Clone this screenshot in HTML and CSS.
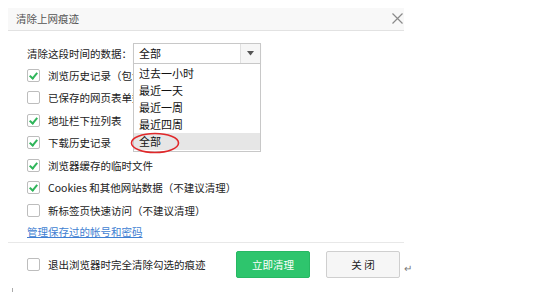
FILE: index.html
```html
<!DOCTYPE html>
<html>
<head>
<meta charset="utf-8">
<link rel="stylesheet" href="styles.css">
</head>
<body>
<div class="dialog">
  <div class="header">
    <span class="title">清除上网痕迹</span>
    <svg class="close-x" width="11" height="11" viewBox="0 0 11 11"><path d="M0.5 0.5 L10.5 10.5 M10.5 0.5 L0.5 10.5" stroke="#8a8a8a" stroke-width="1.2" fill="none"/></svg>
  </div>
  <div class="content">
    <div class="range-row">
      <span class="label">清除这段时间的数据：</span>
      <div class="select">
        <span class="select-value">全部</span>
        <span class="select-arrow"><svg width="7" height="5" viewBox="0 0 7 5"><path d="M0 0 H7 L3.5 4.5 Z" fill="#555"/></svg></span>
        <div class="dropdown">
          <div class="opt">过去一小时</div>
          <div class="opt">最近一天</div>
          <div class="opt">最近一周</div>
          <div class="opt">最近四周</div>
          <div class="opt selected">全部</div>
          <svg class="circle" width="50" height="22" viewBox="0 0 50 22"><ellipse cx="25" cy="11" rx="23.5" ry="9.5" stroke="#e0282a" stroke-width="1.6" fill="none"/></svg>
        </div>
      </div>
    </div>
    <div class="item"><span class="cb on"></span><span>浏览历史记录（包含浏览和下载记录）</span></div>
    <div class="item"><span class="cb"></span><span>已保存的网页表单数据</span></div>
    <div class="item"><span class="cb on"></span><span>地址栏下拉列表</span></div>
    <div class="item"><span class="cb on"></span><span>下载历史记录</span></div>
    <div class="item"><span class="cb on"></span><span>浏览器缓存的临时文件</span></div>
    <div class="item"><span class="cb on"></span><span>Cookies 和其他网站数据（不建议清理）</span></div>
    <div class="item"><span class="cb"></span><span>新标签页快速访问（不建议清理）</span></div>
    <div class="link-row"><a class="link">管理保存过的帐号和密码</a></div>
  </div>
  <div class="footer">
    <div class="item exit"><span class="cb"></span><span>退出浏览器时完全清除勾选的痕迹</span></div>
    <div class="btn primary">立即清理</div>
    <div class="btn secondary">关 闭</div>
    <span class="para">↵</span>
  </div>
</div>
<div class="tick"></div>
</body>
</html>
```

FILE: styles.css
```css
html, body {
  margin: 0;
  padding: 0;
  background: #fff;
}
body {
  font-family: "Noto Sans CJK SC", "Noto Sans", sans-serif;
  font-size: 10.5px;
  color: #222;
}
.dialog {
  margin: 8px 0 0 8px;
  width: 396px;
}
.header {
  height: 22px;
  background: #f8f8f8;
  border-bottom: 1px solid #e2e2e2;
  display: flex;
  align-items: center;
  justify-content: space-between;
  padding: 0 1px 0 8px;
}
.title {
  color: #555;
  line-height: 22px;
}
.close-x {
  display: block;
  margin-top: -2px;
}
.content {
  padding: 12px 0 0 19px;
}
.range-row {
  display: flex;
  align-items: center;
  height: 21px;
}
.label {
  width: 106px;
  flex: none;
  white-space: nowrap;
  line-height: 21px;
}
.select {
  position: relative;
  width: 126px;
  height: 19px;
  border: 1px solid #c8c8c8;
  display: flex;
  align-items: center;
  justify-content: space-between;
  box-shadow: 0 1px 1px rgba(0,0,0,0.05);
}
.select-value {
  padding-left: 5px;
  line-height: 19px;
  font-size: 11px;
  color: #111;
}
.select-arrow {
  width: 19px;
  height: 19px;
  border-left: 1px solid #e0e0e0;
  background: #f6f6f6;
  display: flex;
  align-items: center;
  justify-content: center;
}
.dropdown {
  position: absolute;
  top: 20px;
  left: -1px;
  width: 126px;
  border: 1px solid #c8c8c8;
  border-top: none;
  background: #fff;
  padding-top: 1px;
  padding-bottom: 1px;
}
.opt {
  height: 17px;
  line-height: 17px;
  padding-left: 5px;
  font-size: 11px;
  color: #111;
}
.opt.selected {
  background: #e6e6e6;
}
.circle {
  position: absolute;
  left: -4px;
  top: 68px;
}
.item {
  display: flex;
  align-items: center;
  height: 22.5px;
}
.item span:last-child {
  white-space: nowrap;
}
.cb {
  width: 11px;
  height: 11px;
  border: 1px solid #bdbdbd;
  border-radius: 2px;
  background: #fff;
  margin-right: 8px;
  position: relative;
  flex: none;
}
.cb.on::after {
  content: "";
  position: absolute;
  left: 3px;
  top: 1px;
  width: 3px;
  height: 6px;
  border-right: 2px solid #2fb55a;
  border-bottom: 2px solid #2fb55a;
  transform: rotate(40deg);
}
.link-row {
  height: 20px;
  display: flex;
  align-items: center;
}
.link {
  color: #3f7fd2;
  text-decoration: underline;
  cursor: pointer;
}
.footer {
  border-top: 1px solid #e8e8e8;
  display: flex;
  align-items: center;
  padding: 8px 4px 8px 19px;
  position: relative;
}
.footer .exit {
  flex: 1;
  height: 27px;
}
.btn {
  width: 72px;
  height: 25px;
  border-radius: 2px;
  display: flex;
  align-items: center;
  justify-content: center;
}
.primary {
  background: #2ec56d;
  border: 1px solid #27b863;
  color: #fff;
  margin-right: 16px;
}
.secondary {
  background: #f6f6f6;
  border: 1px solid #cfcfcf;
  color: #222;
}
.para {
  position: absolute;
  right: -8px;
  top: 20px;
  font-size: 10px;
  color: #777;
  line-height: 10px;
}
.tick {
  margin: 2px 0 0 12px;
  width: 1px;
  height: 4px;
  background: #aaa;
}
```
